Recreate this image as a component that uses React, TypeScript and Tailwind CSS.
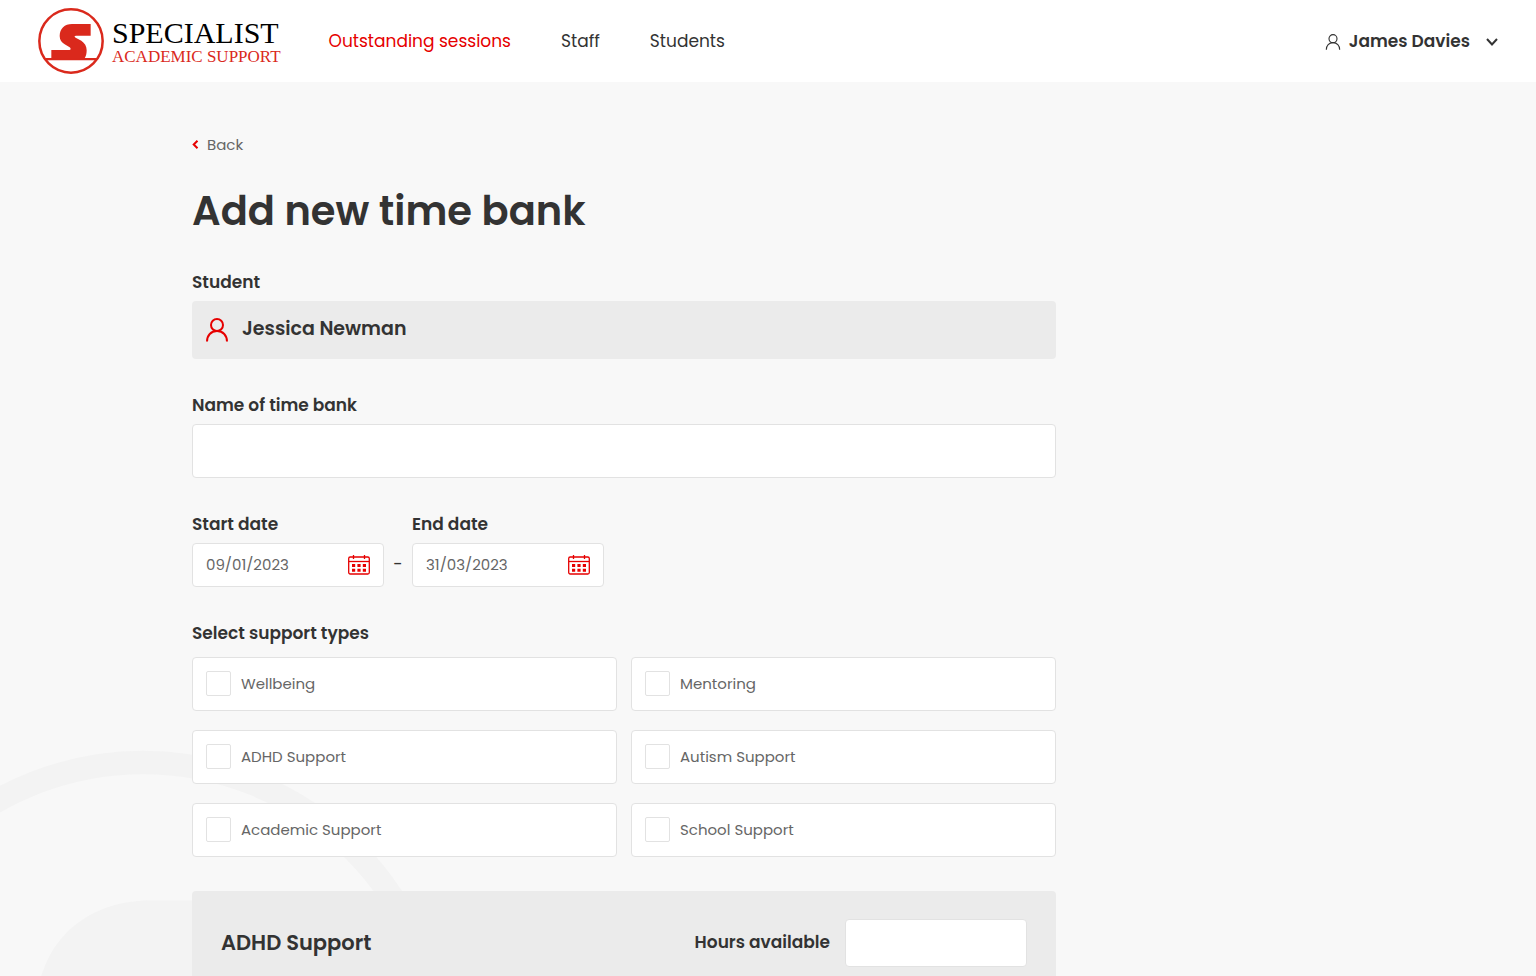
import React, { useState } from 'react';

const SUPPORT_TYPES = [
  'Wellbeing',
  'Mentoring',
  'ADHD Support',
  'Autism Support',
  'Academic Support',
  'School Support',
];

const NAV_LINKS = [
  { label: 'Outstanding sessions', active: true },
  { label: 'Staff', active: false },
  { label: 'Students', active: false },
];

const LogoMark: React.FC<{ className?: string }> = ({ className }) => (
  <svg viewBox="0 0 198 198" className={className} aria-hidden="true">
    <circle cx="99" cy="99" r="95" fill="none" stroke="currentColor" strokeWidth="7.500" />
    <path d="M22 153.500H176" stroke="currentColor" strokeWidth="7" />
    <path
      fill="currentColor"
      d="M158 48H102C80 48 65 62 65 84C65 96 71 103 80 109L95 118C99 121 99 126 94 126H40V151H140C144 145 146 137 146 127C146 114 140 105 130 98L113 89C108 86 109 83 114 83H158Z"
    />
  </svg>
);

const UserIcon: React.FC<{ className?: string; strokeWidth?: number }> = ({ className, strokeWidth = 2 }) => (
  <svg viewBox="0 0 22 24" fill="none" stroke="currentColor" strokeWidth={strokeWidth} className={className} aria-hidden="true">
    <circle cx="11" cy="7" r="6" />
    <path d="M1 23.500C1 17.500 5 13 11 13S21 17.500 21 23.500" />
  </svg>
);

const CalendarIcon: React.FC = () => (
  <svg viewBox="0 0 22 20" fill="none" stroke="currentColor" className="h-5 w-[22px]" aria-hidden="true">
    <rect x="0.700" y="2" width="20.600" height="17" rx="1.500" strokeWidth="1.300" />
    <path d="M1 6.500H21" strokeWidth="1.300" />
    <path d="M5.500 0V4M16.500 0V4" strokeWidth="1.300" />
    <path d="M4 10.500H7.200M9.400 10.500H12.600M14.800 10.500H18M4 15.200H7.200M9.400 15.200H12.600M14.800 15.200H18" strokeWidth="3" />
  </svg>
);

interface DateFieldProps {
  id: string;
  label: string;
  value: string;
  onChange: (value: string) => void;
}

const DateField: React.FC<DateFieldProps> = ({ id, label, value, onChange }) => (
  <div className="w-48">
    <label htmlFor={id} className="block text-[17px] leading-6 font-semibold">{label}</label>
    <div className="mt-[7px] flex h-11 items-center rounded border border-[#e2e2e2] bg-white px-[13px]">
      <input
        id={id}
        type="text"
        value={value}
        onChange={(e) => onChange(e.target.value)}
        className="min-w-0 flex-1 bg-transparent text-[15px] leading-6 text-[#666] outline-none"
      />
      <button type="button" aria-label={`Choose ${label.toLowerCase()}`} className="text-[#e60000]">
        <CalendarIcon />
      </button>
    </div>
  </div>
);

const Header: React.FC = () => (
  <header className="relative flex h-[82px] items-center bg-white px-[38px]">
    <a href="#" className="flex items-center gap-2">
      <LogoMark className="h-[66px] w-[66px] text-[#da291c]" />
      <span className="flex flex-col font-['Liberation_Serif',serif]">
        <span className="text-[30px] leading-[30px] text-black">SPECIALIST</span>
        <span className="text-[17px] leading-[17px] text-[#da291c]">ACADEMIC SUPPORT</span>
      </span>
    </a>
    <nav className="ml-12 flex gap-[50px] pt-0.5 text-[17px]">
      {NAV_LINKS.map((link) => (
        <a key={link.label} href="#" className={link.active ? 'text-[#e60000]' : 'text-[#333]'}>
          {link.label}
        </a>
      ))}
    </nav>
    <button type="button" className="ml-auto flex items-center pt-0.5 text-[17px] font-semibold">
      <UserIcon className="mr-2 h-4 w-4" strokeWidth={1.7} />
      James Davies
      <svg viewBox="0 0 12 8" fill="none" stroke="currentColor" strokeWidth="2" className="ml-4 h-2 w-3" aria-hidden="true">
        <path d="M1 1L6 6.500L11 1" />
      </svg>
    </button>
  </header>
);

export default function App() {
  const [name, setName] = useState('');
  const [startDate, setStartDate] = useState('09/01/2023');
  const [endDate, setEndDate] = useState('31/03/2023');
  const [selected, setSelected] = useState<string[]>([]);
  const [hours, setHours] = useState('');

  const toggleType = (type: string) => {
    setSelected((prev) => (prev.includes(type) ? prev.filter((t) => t !== type) : [...prev, type]));
  };

  return (
    <div className="relative min-h-screen overflow-hidden bg-[#f8f8f8] font-['Poppins','Inter',sans-serif] text-[#333]">
      <LogoMark className="absolute top-[750px] left-[-167px] h-[620px] w-[620px] text-[#f3f3f3]" />
      <Header />

      <main className="relative ml-48 max-w-[864px] pt-[50px]">
        <a href="#" className="inline-flex items-center gap-2 text-[15px] leading-6 text-[#666]">
          <svg viewBox="0 0 7 9" fill="none" stroke="currentColor" strokeWidth="2" className="h-[9px] w-[7px] text-[#e60000]" aria-hidden="true">
            <path d="M5.500 0.700L1.700 4.500L5.500 8.300" />
          </svg>
          Back
        </a>
        <h1 className="mt-[30px] text-[40px] leading-[48px] font-semibold">Add new time bank</h1>

        <form className="mt-[35px] flex flex-col gap-[34px]" onSubmit={(e) => e.preventDefault()}>
          <section>
            <h2 className="text-[17px] leading-6 font-semibold">Student</h2>
            <div className="mt-[7px] flex h-[58px] items-center gap-[14px] rounded bg-[#ebebeb] px-[14px] text-[19px] font-semibold">
              <UserIcon className="h-6 w-[22px] text-[#e60000]" />
              Jessica Newman
            </div>
          </section>

          <div>
            <label htmlFor="bank-name" className="block text-[17px] leading-6 font-semibold">Name of time bank</label>
            <input
              id="bank-name"
              type="text"
              value={name}
              onChange={(e) => setName(e.target.value)}
              className="mt-[7px] block h-[54px] w-full rounded border border-[#e2e2e2] bg-white px-[13px] text-[15px] outline-none"
            />
          </div>

          <div className="flex">
            <DateField id="start-date" label="Start date" value={startDate} onChange={setStartDate} />
            <span className="flex h-11 w-7 items-center justify-center self-end text-[17px]">-</span>
            <DateField id="end-date" label="End date" value={endDate} onChange={setEndDate} />
          </div>

          <fieldset>
            <legend className="text-[17px] leading-6 font-semibold">Select support types</legend>
            <div className="mt-3 grid grid-cols-2 gap-x-[14px] gap-y-[19px]">
              {SUPPORT_TYPES.map((type) => (
                <label
                  key={type}
                  className="flex h-[54px] items-center gap-[10px] rounded border border-[#e2e2e2] bg-white px-[13px] text-[15px] leading-6 text-[#666]"
                >
                  <input
                    type="checkbox"
                    checked={selected.includes(type)}
                    onChange={() => toggleType(type)}
                    className="h-[25px] w-[25px] appearance-none rounded-xs border border-[#e2e2e2] bg-white checked:bg-[#e60000]"
                  />
                  {type}
                </label>
              ))}
            </div>
          </fieldset>

          <section className="flex items-center rounded bg-[#ebebeb] px-[29px] py-7">
            <h2 className="text-[21px] font-semibold">ADHD Support</h2>
            <label htmlFor="hours" className="ml-auto text-[17px] font-semibold">Hours available</label>
            <input
              id="hours"
              type="text"
              value={hours}
              onChange={(e) => setHours(e.target.value)}
              className="ml-[15px] h-12 w-[182px] rounded border border-[#e2e2e2] bg-white px-[13px] text-[15px] outline-none"
            />
          </section>
        </form>
      </main>
    </div>
  );
}
